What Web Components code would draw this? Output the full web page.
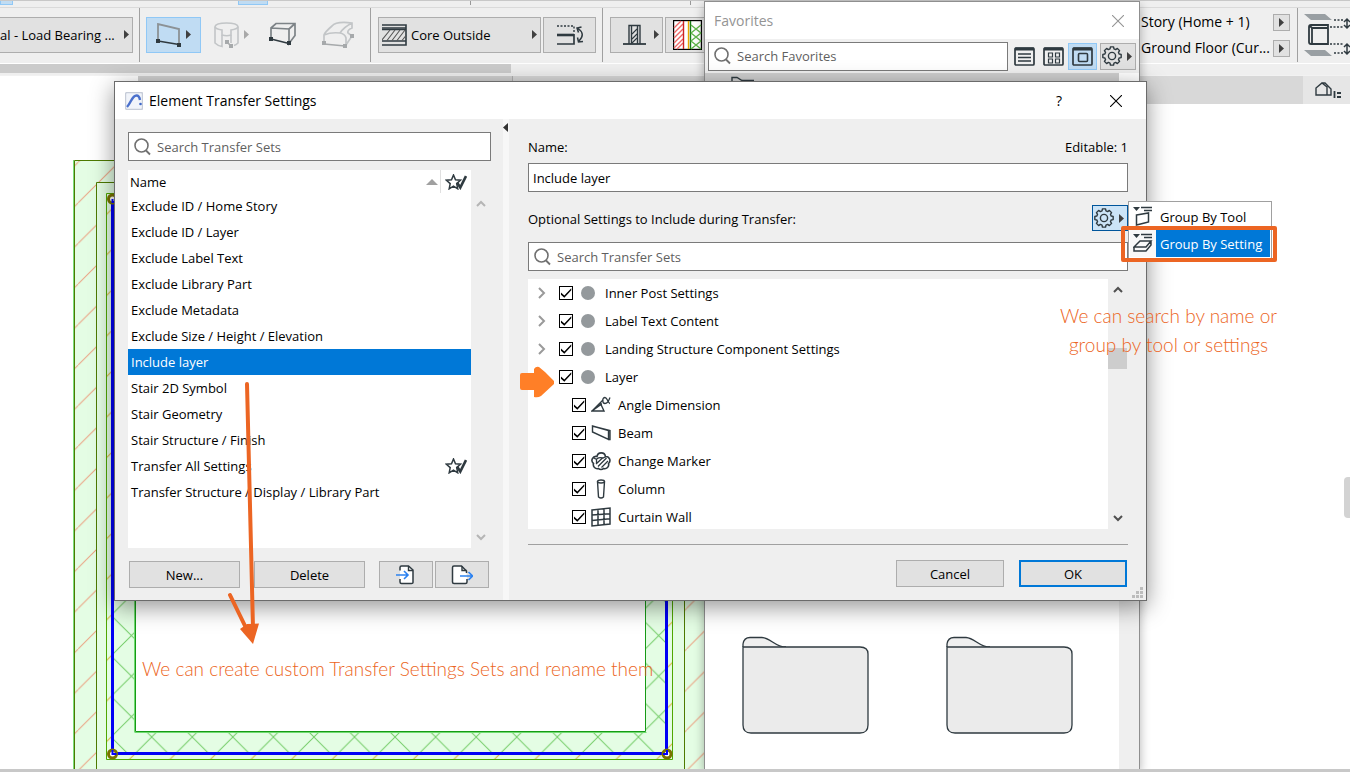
<!DOCTYPE html>
<html lang="en">
<head>
<meta charset="utf-8">
<title>Element Transfer Settings</title>
<style>
  html, body { margin: 0; height: 100%; }
  body { font: 13px/20px "Open Sans", "Noto Sans", sans-serif; color: #000; background: #fff; overflow: hidden; }
</style>
</head>
<body>
<app-shell></app-shell>

<script>
const INK = '#2f3a40';

function gearPath(c, inner, outer) {
  const pts = [];
  for (let i = 0; i < 8; i++) {
    const a = i * Math.PI / 4;
    [[-0.27, inner], [-0.17, outer], [0.17, outer], [0.27, inner]].forEach(([d, r]) =>
      pts.push((c + r * Math.sin(a + d)).toFixed(2) + ' ' + (c - r * Math.cos(a + d)).toFixed(2)));
  }
  return 'M' + pts.join('L') + 'Z';
}

/* name: [width, height, markup] */
const ICONS = {
  search: [17, 18, '<circle cx="7.5" cy="7.5" r="6.5" stroke="#707070" stroke-width="1.6"/><path d="M12 12.5l4 4" stroke="#707070" stroke-width="1.8"/>'],
  gear: [20, 20, `<path d="${gearPath(10, 7.4, 9.3)}" stroke-linejoin="round" stroke-width="1.4"/><circle cx="10" cy="10" r="3.6" stroke-width="1.4"/>`],
  play: [5, 9, '<path d="M0 0l5 4.5L0 9z" fill="#404040" stroke="none"/>'],
  playDim: [5, 9, '<path d="M0 0l5 4.5L0 9z" fill="#a8a8a8" stroke="none"/>'],
  collapse: [5, 9, '<path d="M5 0v9L0 4.5z" fill="#333" stroke="none"/>'],
  sort: [12, 6, '<path d="M0 6L6 0l6 6z" fill="#a0a0a0" stroke="none"/>'],
  close: [12, 12, '<path d="M0 0l12 12M12 0L0 12" stroke="currentColor" stroke-width="1.1"/>'],
  right: [8, 12, '<path d="M1 1l5 5-5 5" stroke="#9a9a9a" stroke-width="2"/>'],
  up: [10, 7, '<path d="M1 6l4-4 4 4" stroke="currentColor" stroke-width="2"/>'],
  down: [10, 7, '<path d="M1 1l4 4 4-4" stroke="currentColor" stroke-width="2"/>'],
  star: [22, 16, '<path d="M8.500 1l2 4.800 5 .4-3.800 3.400 1 5.200-4.200-2.700L4.200 14.800l1-5.200L1.300 6.200l5.200-.4z" stroke-width="1.500"/><path d="M12 8.500l3.300 5L21 2" stroke-width="2.600"/>'],
  dot: [14, 14, '<circle cx="7" cy="7" r="7" fill="#94999c" stroke="none"/>'],
  app: [18, 18, '<rect x=".5" y=".5" width="17" height="17" rx="1.500" fill="#f1f4fa" stroke="#c6ccd8"/><path d="M2 15C6 11 7 3.500 11.500 3.500c2.500 0 3 1.500 3.500 4.500" stroke="#4a70cc" stroke-width="2.400"/><circle cx="15.500" cy="12" r="1.300" fill="#3f68c8" stroke="none"/>'],
  angle: [20, 18, '<path d="M1 15h12L10 8.500zM1 15L12 4M8 8l3 0"/><path d="M19 1.500c-1.500 4-3 6-5 6-3 0-3-6 0-6 2.500 0 3 6 5 6" stroke-width="1.300"/>'],
  beam: [20, 18, '<path d="M1.500 2v6l16 7.500V6.500zM1 2l18 4.500v9h-2"/>'],
  marker: [20, 20, '<path d="M6 5.500a4.300 4.300 0 0 1 8.500 0 4 4 0 0 1 3 7 4 4 0 0 1-5 5 3.500 3.500 0 0 1-5 0 4 4 0 0 1-5-5A4 4 0 0 1 6 5.500z" stroke-width="1.600"/><path d="M2.500 6.500Q5 9 6.500 7.500T12 7l3-1.500M5 13l6.500-6M7 15.500l8.500-8.500M10.500 16.500L17 10M5.500 8v5" stroke-width="1.300"/>'],
  column: [20, 20, '<path d="M6.500 2.500l1 15.500q2.500 2 5 0l1-15.500"/><ellipse cx="10" cy="2.500" rx="3.500" ry="1.500"/>'],
  curtain: [20, 20, '<path d="M1 3l18-2v16L1 19zM7 2.300v16M13 1.700v16M1 8l18-1.300M1 13.500l18-1.800" stroke-width="1.500"/>'],
  groupTool: [20, 20, '<path d="M0 1h7L3.500 5z" fill="#2f3a40" stroke="none"/><path d="M8 1.500h11M11 4.500h8M3.500 9l12-2v9l-4 1-8 2z" stroke-width="1.500"/>'],
  groupSetting: [20, 20, '<path d="M0 1h7L3.500 5z" fill="#2f3a40" stroke="none"/><path d="M8 1.500h11M11 4.500h8M7 8h11l-5 6H1zM1 14v4h12l5-6V8" stroke-width="1.500"/>'],
  importSet: [22, 20, '<path d="M5 5.500V2.500q0-1.500 1.500-1.500h7L18 5v12.500q0 1-1.500 1h-10Q5 18.500 5 17v-3" fill="#fff" stroke-width="1.500"/><path d="M13.500 1v4.500H18"/><path d="M1 10h11M9 6l4 4-4 4" stroke="#2c82f0" stroke-width="1.600"/>'],
  exportSet: [22, 20, '<path d="M16 14v3q0 1.500-1.500 1.500H3q-1.500 0-1.500-1.500V2.500Q1.500 1 3 1h7.500L15.500 6v2" fill="#fff" stroke-width="1.500"/><path d="M11 1v4.500h4.500"/><path d="M9 11h12M17.500 7l4 4-4 4" stroke="#2c82f0" stroke-width="1.600"/>'],
  listView: [21, 19, '<rect x="1" y="1" width="19" height="17" rx="1" stroke-width="1.700"/><path d="M1 2h19" stroke-width="3"/><path d="M4 7h13M4 10.500h13M4 14h13" stroke-width="1.300"/>'],
  gridView: [21, 19, '<rect x="1" y="1" width="19" height="17" rx="1" stroke-width="1.700"/><path d="M1 2h19" stroke-width="3"/><path d="M5.500 6h4v4h-4zM12.500 6h4v4h-4zM5.500 12h4v4h-4zM12.500 12h4v4h-4z" stroke-width="1.200"/>'],
  cardView: [21, 19, '<rect x="1" y="1" width="19" height="17" rx="1" stroke-width="1.700"/><path d="M1 2h19" stroke-width="3"/><rect x="6.500" y="6.500" width="9" height="8" rx="1" stroke-width="1.600"/>'],
  wallRect: [26, 24, '<path d="M2 18V1l21 5v15" stroke="#8c9296" stroke-width="1.800"/><path d="M2 18l21 3.500" stroke-width="1.600"/><path d="M0 16h4v4H0zM21 20h4v4h-4z" fill="#2f3a40" stroke="none"/>'],
  wallCurve: [26, 26, '<g stroke="#c2c5c7" stroke-width="1.600"><path d="M8 8q-7-1-7-3.500Q2 1 12.500 1T24 4.500Q24 7 17 8v5q-4 1.500-9 0z"/><path d="M1 5v16q3 3 7 3.500V13M17 13v8M24 5v16q-2 2-4 2.500"/></g><path d="M13 20l4 4" stroke="#999"/><path d="M11 18h4v4h-4zM15 22h4v4h-4z" fill="#a6a9ab" stroke="none"/>'],
  wallBox: [28, 25, '<path d="M2 17V6l5-4.500h19v12l-6 8V7L2 6M20 7l6-5.500" stroke="#7d8387" stroke-width="1.700"/><path d="M2 17l18 4.500" stroke-width="1.600"/><path d="M0 15h4v4H0zM18 19h4v4h-4z" fill="#2f3a40" stroke="none"/>'],
  wallPoly: [32, 27, '<g stroke="#c2c5c7" stroke-width="1.700"><path d="M2 22V14Q3 11 10 5q4-5 20-3v5q-5 2-4 5l4 3-6 9V17Q23 13 18 12q-9-1-16 2M18 12q4-6 12-10"/></g><path d="M2 23l21 2" stroke="#a6a9ab"/><path d="M0 20h4v4H0zM21 23h4v4h-4zM28 13h4v4h-4z" fill="#a6a9ab" stroke="none"/>'],
  coreOutside: [25, 24, '<path d="M0 2h24v20H0M0 18h24M0 5h24" stroke-width="1.600"/><path d="M0 6.500h24" stroke-width="1.500"/><path d="M0 17l8-10M5 17.500L13 7M10 17.500L18 7M15 17.500L23 7M20 17.500l4-5" stroke="#555" stroke-width="1.100"/>'],
  flip: [28, 22, '<path d="M1 2h17v7" stroke-dasharray="2 1.500" stroke-width="1.400"/><path d="M1 11h17" stroke-width="2.600"/><path d="M18 10v10H1" stroke-width="1.700"/><path d="M22 4.500q8 5.500 1 12.500M25.500 3L21 4l1.500 4.500M21.500 13.500l1 4.500 4.500-.5" stroke-width="1.500"/>'],
  profile: [23, 22, '<path d="M0 20h23" stroke-width="1.800"/><path d="M6 20V1.500h11V20M8.500 2v18M14.500 2v18" stroke-width="1.400"/><path d="M9 10l5-5M9 15l5-5M9 19l5-5" stroke-width="1.100"/>'],
  composite: [29, 30, '<rect x=".5" y=".5" width="28" height="29" fill="#fff" stroke="#000"/><path d="M1 8l7-7M1 13L10 4M1 18l9-9M1 23l9-9M1 28l9-9M4 29l6-6" stroke="#e66"/><path d="M10.500 1v28" stroke="#c22"/><path d="M15.500 1v28" stroke="#e7a400"/><path d="M17.500 1v28" stroke="#197a19"/><path d="M18 5l10 8M18 13l10 8M18 21l10 8M28 5l-10 8M28 13l-10 8M28 21l-10 8" stroke="#5fb54a"/>'],
  story: [46, 44, '<path d="M0 1h21l7 6H7zM0 37h21l7 6H7z" fill="#999fa3" stroke="none"/><path d="M5 14q0-2 2-2h17v19H7q-2 0-2-2zM5 14q3-1 3 2v14M8 15h16" stroke-width="1.800"/><path d="M30 7h10M26 14h14M26 31h14M30 40h10" stroke-dasharray="2 1.500" stroke-width="1.300"/><path d="M43 6v9M43 31v10M40 9l3-3 3 3M40 12l3 3 3-3M40 34l3-3 3 3M40 38l3 3 3-3" stroke-width="1.500"/>'],
  houseList: [28, 17, '<path d="M1 12V6l6-5 5 4v8H1zM7 1h3l6 6v6h-4" stroke-width="1.400"/><path d="M19.500 9v7M22 11h4M22 15h4" stroke-width="1.800"/>'],
  folderSmall: [23, 6, '<path d="M1 6V1.500h5l5 3h12"/>'],
  folder: [128, 98, '<path d="M1 11V8Q2 1.500 8 1.500h12C29 2 33 11 44 11" fill="#efefef" stroke-width="1.300"/><path d="M1 11h117q8 0 8 7v71q0 8-8 8H9q-8 0-8-8z" fill="#ebebeb" stroke-width="1.300"/>'],
  grip: [11, 11, '<path d="M8 0h3v3H8zM4 4h3v3H4zM8 4h3v3H8zM0 8h3v3H0zM4 8h3v3H4zM8 8h3v3H8z" fill="#bcbcbc" stroke="none"/>']
};

class Base extends HTMLElement {
  render(html) { this.attachShadow({ mode: 'open' }).innerHTML = html; }
}

class UiIcon extends Base {
  connectedCallback() {
    if (this.shadowRoot) return;
    const [w, h, body] = ICONS[this.getAttribute('name')];
    this.render(`<style>:host{display:block;flex:none;width:${w}px;height:${h}px}svg{display:block}</style>
      <svg width="${w}" height="${h}" viewBox="0 0 ${w} ${h}" fill="none" stroke="${INK}" stroke-width="1.4" aria-hidden="true">${body}</svg>`);
  }
}
customElements.define('ui-icon', UiIcon);

/* Push button; the kind attribute picks the look. */
class UiButton extends Base {
  connectedCallback() {
    if (this.shadowRoot) return;
    const label = this.getAttribute('label');
    this.render(`<style>
      :host{display:block;height:27px}
      button{box-sizing:border-box;width:100%;height:100%;margin:0;padding:0 4px;display:flex;align-items:center;justify-content:center;gap:4px;
        font:inherit;color:inherit;white-space:nowrap;background:#e1e1e1;border:1px solid #adadad;border-radius:0}
      :host([kind=default]) button{border:2px solid #0078d7}
      :host([kind=on]) button{background:#c0dcf3;border-color:#90c8f6}
      :host([kind=focus]) button{background:#cce4f7;border-color:#00559b}
      :host([kind=flat]) button{background:none;border-color:transparent}
      :host([kind=combo]) button{justify-content:space-between;padding:0 3px}
      :host([kind=edge]) button{justify-content:space-between;padding:0 3px 0 0;border-left:0}
      :host([spread]) button{justify-content:space-between;padding:0 3px 0 1px}
      </style><button type="button" ${label ? `aria-label="${label}"` : ''}><slot></slot></button>`);
  }
}
customElements.define('ui-button', UiButton);

class SearchField extends Base {
  connectedCallback() {
    if (this.shadowRoot) return;
    const text = this.getAttribute('placeholder');
    this.render(`<style>
      :host{display:block}
      label{box-sizing:border-box;height:29px;display:flex;align-items:center;gap:6px;padding-left:5px;background:#fff;border:1px solid #7a7a7a}
      input{flex:1;min-width:0;height:24px;margin:0;padding:0;border:0;outline:0;background:none;font:inherit}
      input::placeholder{color:#5f5f5f;opacity:1}
      </style><label><ui-icon name="search"></ui-icon><input type="text" aria-label="${text}" placeholder="${text}"></label>`);
  }
}
customElements.define('search-field', SearchField);

class TreeRow extends Base {
  connectedCallback() {
    if (this.shadowRoot) return;
    const child = this.hasAttribute('child');
    this.render(`<style>
      :host{display:flex;align-items:center;height:28px;padding-left:${child ? 44 : 10}px}
      .twist{width:21px}
      label{display:flex;align-items:center;white-space:nowrap}
      input{appearance:none;flex:none;box-sizing:border-box;width:14px;height:14px;margin:0;border:1px solid #000;background:#fff}
      input:checked::before{content:"";display:block;width:12px;height:12px;background:#000;clip-path:polygon(8% 46%,8% 64%,36% 90%,94% 28%,94% 10%,36% 70%)}
      .mark{width:20px;margin:0 ${child ? '7px 0 5px' : '4px 0 8px'}}
      </style>
      ${child ? '' : `<span class="twist">${this.hasAttribute('open') ? '' : '<ui-icon name="right"></ui-icon>'}</span>`}
      <label><input type="checkbox" checked><span class="mark"><ui-icon name="${this.getAttribute('icon') || 'dot'}"></ui-icon></span><slot></slot></label>`);
  }
}
customElements.define('tree-row', TreeRow);

class SetTable extends Base {
  connectedCallback() {
    if (this.shadowRoot) return;
    const rows = ['Exclude ID / Home Story', 'Exclude ID / Layer', 'Exclude Label Text', 'Exclude Library Part', 'Exclude Metadata',
      'Exclude Size / Height / Elevation', 'Include layer', 'Stair 2D Symbol', 'Stair Geometry', 'Stair Structure / Finish',
      'Transfer All Settings', 'Transfer Structure / Display / Library Part'];
    this.render(`<style>
      :host{display:block;flex:1;background:#fff}
      table{width:100%;border-collapse:collapse;table-layout:fixed}
      th,td{padding:0 0 0 3px;text-align:left;font-weight:normal;white-space:nowrap}
      th{height:23px;padding-left:2px}
      td{height:26px}
      th:last-child,td:last-child{width:26px;padding-left:4px}
      th:last-child{border-left:1px solid #e0e0e0}
      .head{display:flex;align-items:center;justify-content:space-between;padding-right:2px}
      .sel{background:#0078d7;color:#fff}
      </style>
      <table><thead><tr><th><span class="head">Name<ui-icon name="sort"></ui-icon></span></th><th aria-label="Favorite"><ui-icon name="star"></ui-icon></th></tr></thead>
      <tbody>${rows.map(r => `<tr${r === 'Include layer' ? ' class="sel" aria-selected="true"' : ''}><td>${r}</td><td>${r === 'Transfer All Settings' ? '<ui-icon name="star"></ui-icon>' : ''}</td></tr>`).join('')}</tbody></table>`);
  }
}
customElements.define('set-table', SetTable);

class GroupMenu extends Base {
  connectedCallback() {
    if (this.shadowRoot) return;
    this.render(`<style>
      :host{display:block;box-sizing:border-box;width:144px;padding:1px;background:#fff;border:1px solid #a0a0a0}
      button{box-sizing:border-box;width:100%;height:27px;margin:0;padding:0;display:flex;align-items:center;border:0;background:#fff;font:inherit;color:#000;white-space:nowrap}
      span{box-sizing:border-box;width:26px;height:27px;margin-right:4px;padding:3px;background:#fff}
      .on{background:#0078d7;color:#fff}
      .on span{background:#f8f8f8}
      </style>
      <button type="button"><span><ui-icon name="groupTool"></ui-icon></span>Group By Tool</button>
      <button type="button" class="on"><span><ui-icon name="groupSetting"></ui-icon></span>Group By Setting</button>`);
  }
}
customElements.define('group-menu', GroupMenu);

class TransferDialog extends Base {
  connectedCallback() {
    if (this.shadowRoot) return;
    this.render(`<style>
      :host{display:flex;flex-direction:column;box-sizing:border-box;border:1px solid #6b6b6b;background:#efefef;box-shadow:0 6px 22px rgba(0,0,0,.42)}
      header{display:flex;align-items:center;height:37px;padding:0 23px 0 10px;background:#fff;font-size:14px}
      header span{flex:1;padding-left:6px}
      header button{border:0;background:none;padding:0;margin-left:43px;font:inherit;color:#000;width:14px;height:20px;display:flex;align-items:center;justify-content:center}
      .body{display:grid;grid-template-columns:388px 6px 1fr}
      .left{display:flex;flex-direction:column;padding:13px 12px 12px 13px}
      .split{background:#f7f7f7;padding:4px 0 0 0}
      .list{display:flex;height:378px;margin-top:9px}
      .bar{box-sizing:border-box;width:20px;display:flex;flex-direction:column;align-items:center;justify-content:space-between;padding:30px 0 7px;color:#b5b5b5}
      .acts{display:flex;margin:13px 0 0 1px;gap:14px}
      .acts ui-button{width:111px}
      .acts div{display:flex;gap:2px}
      .acts div ui-button{width:54px}
      .right{display:flex;flex-direction:column;padding:13px 18px 13px 19px}
      .row{display:flex;align-items:center;justify-content:space-between}
      .name{height:29px;padding-bottom:2px}
      #setname{box-sizing:border-box;width:100%;height:29px;margin:0;padding:0 4px;border:1px solid #7a7a7a;border-radius:0;background:#fff;font:inherit;color:#000}
      .opt{height:26px;margin:13px 0 11px}
      .opt>span{padding-top:2px}
      .opt>div{position:relative}
      .opt ui-button{width:36px;height:26px}
      group-menu{position:absolute;left:100%;top:-4px;z-index:3}
      .tree{display:flex;height:250px;margin-top:8px}
      .rows{flex:1;overflow:hidden;background:#fff}
      .scroll{box-sizing:border-box;width:20px;display:flex;flex-direction:column;align-items:center;padding:7px 1px 7px 0;color:#505050}
      .thumb{width:19px;height:21px;margin:55px 0 auto;background:#cdcdcd}
      hr{width:100%;margin:15px 0 15px;border:0;border-top:1px solid #a0a0a0}
      .end{display:flex;justify-content:flex-end;gap:15px;padding-right:1px}
      .end ui-button{width:108px}
      .grip{position:absolute;right:3px;bottom:2px}
      </style>
      <header><ui-icon name="app"></ui-icon><span>Element Transfer Settings</span>
        <button type="button" aria-label="Help">?</button><button type="button" aria-label="Close"><ui-icon name="close"></ui-icon></button></header>
      <div class="body">
        <div class="left">
          <search-field placeholder="Search Transfer Sets"></search-field>
          <div class="list"><set-table></set-table><div class="bar"><ui-icon name="up"></ui-icon><ui-icon name="down"></ui-icon></div></div>
          <div class="acts"><ui-button>New...</ui-button><ui-button>Delete</ui-button>
            <div><ui-button label="Import"><ui-icon name="importSet"></ui-icon></ui-button><ui-button label="Export"><ui-icon name="exportSet"></ui-icon></ui-button></div></div>
        </div>
        <div class="split"><ui-icon name="collapse"></ui-icon></div>
        <div class="right">
          <div class="row name"><label for="setname">Name:</label><span>Editable: 1</span></div>
          <input id="setname" type="text" value="Include layer">
          <div class="row opt"><span>Optional Settings to Include during Transfer:</span>
            <div><ui-button kind="focus" spread label="Grouping"><ui-icon name="gear"></ui-icon><ui-icon name="play"></ui-icon></ui-button><group-menu></group-menu></div></div>
          <search-field placeholder="Search Transfer Sets"></search-field>
          <div class="tree"><div class="rows">
            <tree-row>Inner Post Settings</tree-row>
            <tree-row>Label Text Content</tree-row>
            <tree-row>Landing Structure Component Settings</tree-row>
            <tree-row open>Layer</tree-row>
            <tree-row child icon="angle">Angle Dimension</tree-row>
            <tree-row child icon="beam">Beam</tree-row>
            <tree-row child icon="marker">Change Marker</tree-row>
            <tree-row child icon="column">Column</tree-row>
            <tree-row child icon="curtain">Curtain Wall</tree-row>
          </div><div class="scroll"><ui-icon name="up"></ui-icon><div class="thumb"></div><ui-icon name="down"></ui-icon></div></div>
          <hr>
          <div class="end"><ui-button>Cancel</ui-button><ui-button kind="default">OK</ui-button></div>
        </div>
      </div>
      <ui-icon class="grip" name="grip"></ui-icon>`);
  }
}
customElements.define('transfer-dialog', TransferDialog);

class FavoritesPanel extends Base {
  connectedCallback() {
    if (this.shadowRoot) return;
    this.render(`<style>
      :host{display:flex;flex-direction:column;box-sizing:border-box;border:1px solid #8f8f8f;border-bottom:0;background:#fff;box-shadow:0 4px 10px rgba(0,0,0,.3)}
      header{display:flex;align-items:center;justify-content:space-between;height:37px;padding:0 15px 0 9px;color:#949494;font-size:14px}
      header button{border:0;background:none;padding:0;color:#949494}
      .tools{display:flex;align-items:center;height:34px;padding:0 3px;background:#f0f0f0}
      search-field{flex:1;margin-right:2px}
      .tools ui-button{width:29px}
      .tools ui-button.gear{width:36px;margin-left:3px}
      .path{height:8px;margin-right:20px;padding:3px 0 0 26px;box-sizing:border-box;background:#cfcfcf;overflow:hidden}
      .view{flex:1;display:flex}
      .items{flex:1;display:flex;gap:76px;padding:555px 0 0 37px}
      .bar{width:20px;background:#efefef}
      </style>
      <header><span>Favorites</span><button type="button" aria-label="Close"><ui-icon name="close"></ui-icon></button></header>
      <div class="tools"><search-field placeholder="Search Favorites"></search-field>
        <ui-button kind="flat" label="List"><ui-icon name="listView"></ui-icon></ui-button>
        <ui-button kind="flat" label="Grid"><ui-icon name="gridView"></ui-icon></ui-button>
        <ui-button kind="on" label="Cards"><ui-icon name="cardView"></ui-icon></ui-button>
        <ui-button class="gear" spread label="Options"><ui-icon name="gear"></ui-icon><ui-icon name="play"></ui-icon></ui-button></div>
      <div class="path"><ui-icon name="folderSmall"></ui-icon></div>
      <div class="view"><div class="items"><ui-icon name="folder"></ui-icon><ui-icon name="folder"></ui-icon></div><div class="bar"></div></div>`);
  }
}
customElements.define('favorites-panel', FavoritesPanel);

class OptionBar extends Base {
  connectedCallback() {
    if (this.shadowRoot) return;
    this.render(`<style>
      :host{display:block;background:#efefef}
      .strip{box-sizing:border-box;height:8px;display:flex;border-top:1px solid #c8c8c8;border-bottom:1px solid #dadada}
      .strip i{height:4px;box-sizing:border-box}
      .hot{background:#c0dcf3;border:1px solid #90c8f6;border-top:0}
      .tick{width:1px;background:#999}
      .bar{display:flex;align-items:center;height:56px;gap:6px;box-sizing:border-box;border-bottom:1px solid #fff;padding-bottom:1px}
      .sep{flex:none;width:1px;height:54px;background:#a0a0a0}
      .bar ui-button{height:36px;margin-bottom:1px;flex:none}
      .bar .type{width:133px}
      .pair{display:flex;gap:2px;margin-left:1px}
      .gap{flex:1}
      .stories{width:150px;font-size:14px}
      .stories div{display:flex;align-items:center;justify-content:space-between;height:26px;padding-right:1px;white-space:nowrap}
      .bar .stories ui-button{width:17px;height:17px;margin:0}
      .scroll{height:11px;display:flex}
      .scroll div{width:511px;height:9px;background:#cbcbcb}
      </style>
      <div class="strip"><i class="hot" style="width:13px"></i><i style="width:225px"></i><i class="hot" style="width:30px"></i><i style="width:202px"></i><i class="tick"></i><i style="width:219px"></i><i class="tick"></i></div>
      <div class="bar">
        <ui-button class="type" kind="edge"><span>al - Load Bearing ...</span><ui-icon name="play"></ui-icon></ui-button>
        <div class="sep"></div>
        <ui-button kind="on" label="Straight wall" style="width:55px"><ui-icon name="wallRect"></ui-icon><ui-icon name="play"></ui-icon></ui-button>
        <ui-button kind="flat" label="Curved wall" style="width:48px"><ui-icon name="wallCurve"></ui-icon><ui-icon name="playDim"></ui-icon></ui-button>
        <ui-button kind="flat" label="Box wall" style="width:44px"><ui-icon name="wallBox"></ui-icon></ui-button>
        <ui-button kind="flat" label="Polygonal wall" style="width:53px"><ui-icon name="wallPoly"></ui-icon></ui-button>
        <div class="sep"></div>
        <div class="pair"><ui-button kind="combo" style="width:163px"><ui-icon name="coreOutside"></ui-icon><span style="flex:1;text-align:left">Core Outside</span><ui-icon name="play"></ui-icon></ui-button>
        <ui-button label="Flip" style="width:53px"><ui-icon name="flip"></ui-icon></ui-button></div>
        <div class="sep"></div>
        <div class="pair"><ui-button kind="combo" label="Profile" style="width:53px"><span></span><ui-icon name="profile"></ui-icon><ui-icon name="play"></ui-icon></ui-button>
        <ui-button label="Composite" style="width:44px"><ui-icon name="composite"></ui-icon></ui-button></div>
        <div class="gap"></div>
        <div class="stories">
          <div>Story (Home + 1)<ui-button label="Home story"><ui-icon name="play"></ui-icon></ui-button></div>
          <div>Ground Floor (Cur...<ui-button label="Current story"><ui-icon name="play"></ui-icon></ui-button></div></div>
        <div class="sep"></div>
        <ui-icon name="story"></ui-icon>
      </div>
      <div class="scroll"><div></div></div>`);
  }
}
customElements.define('option-bar', OptionBar);

class FloorPlan extends Base {
  connectedCallback() {
    if (this.shadowRoot) return;
    this.render(`<style>:host{display:block;overflow:hidden}svg{display:block}</style>
      <svg width="760" height="665" viewBox="0 104 760 665" fill="none" role="img" aria-label="Floor plan">
        <defs>
          <pattern id="brick" patternUnits="userSpaceOnUse" x="37.64" y="0" width="40.56" height="40.56"><path d="M40.56 0L0 40.56" stroke="#eb9f80"/></pattern>
          <pattern id="gold" patternUnits="userSpaceOnUse" x="37" y="0" width="40.56" height="40.56"><path d="M40.56 0L0 40.56" stroke="#d8b23c"/></pattern>
          <pattern id="wool" patternUnits="userSpaceOnUse" x="151.7" y="737" width="40.56" height="40.56"><path d="M0 0l40.56 40.56M40.56 0L0 40.56" stroke="#74cc68"/></pattern>
        </defs>
        <path d="M74 160.500h640V790H74z" fill="#e4fde4"/>
        <path d="M74 160h640v640H74z" fill="url(#brick)"/>
        <path d="M96.500 182.500h588V790h-588z" fill="#e4fde4" stroke="#4d7a00"/>
        <path d="M74.500 790V160.500H714" stroke="#4d7a00"/><path d="M73.500 790V160" stroke="#7bdc7b"/>
        <path d="M106.500 193.500h566v566h-566z" fill="url(#gold)" stroke="#4fa800"/>
        <path d="M112.500 199h554v554.500h-554z" fill="#e4fde4"/>
        <path d="M112.500 199h554v554.500h-554z" fill="url(#wool)" stroke="#0000f5" stroke-width="3"/>
        <path d="M135.500 221.500h510v510h-510z" fill="#fff" stroke="#169a16"/>
        <path d="M134.500 732.500h512" stroke="#6fdc6f"/><path d="M134.500 221v511" stroke="#6fdc6f"/>
        <g fill="#fff" stroke="#7a7200" stroke-width="3"><circle cx="112.500" cy="199" r="4"/><circle cx="112.500" cy="754" r="4"/><circle cx="667" cy="754" r="4"/></g>
        <path d="M112.500 199v3h2M112.500 750v4h4M667 750v4h-4" stroke="#00f" stroke-width="2"/>
      </svg>`);
  }
}
customElements.define('floor-plan', FloorPlan);

/* Orange note text laid over the windows. */
class CalloutNote extends Base {
  connectedCallback() {
    if (this.shadowRoot) return;
    this.render(`<style>:host{display:block;font:300 19px/29px Lato,"Open Sans",sans-serif;color:#ec6523;text-align:center;white-space:nowrap}p{margin:0}</style><p><slot></slot></p>`);
  }
}
customElements.define('callout-note', CalloutNote);

class AppShell extends Base {
  connectedCallback() {
    if (this.shadowRoot) return;
    this.render(`<style>
      :host{position:relative;display:flex;flex-direction:column;height:100vh;overflow:hidden}
      .tabs{display:flex;flex:none;height:28px;border-top:1px solid #f2f2f2}
      .tabs .a{width:138px}
      .tabs .b{width:374px;background:#d0d0d0;border-right:1px solid #b0b0b0}
      .tabs .c{flex:1;background:#d8d8d8}
      .tabs .d{width:47px;background:#e6e6e6;display:flex;align-items:center;box-sizing:border-box;padding-left:12px}
      floor-plan{flex:1}
      .status{flex:none;height:3px;background:#c8c8c8;position:relative;z-index:5}
      favorites-panel{position:absolute;top:1px;right:210px;bottom:3px;width:436px}
      transfer-dialog{position:absolute;top:81px;left:114px;right:203px}
      .handle{position:absolute;right:0;top:477px;width:6px;height:41px;background:#d3d3d3;border-radius:4px 0 0 4px}
      .frame{position:absolute;z-index:4;right:73px;top:226px;width:156px;height:36px;box-sizing:border-box;border:4px solid #ec6523;border-radius:2px}
      callout-note,.arrows,.hint{position:absolute;z-index:4}
      .n1{left:142px;top:654px}
      .n2{right:73px;top:301px}
      .arrows{left:220px;top:375px}
      .hint{left:519px;top:366px}
      </style>
      <option-bar></option-bar>
      <div class="tabs"><div class="a"></div><div class="b"></div><div class="c"></div><div class="d"><ui-icon name="houseList"></ui-icon></div></div>
      <floor-plan></floor-plan>
      <div class="status"></div>
      <div class="handle"></div>
      <favorites-panel></favorites-panel>
      <transfer-dialog></transfer-dialog>
      <div class="frame"></div>
      <svg class="arrows" width="50" height="275" viewBox="220 375 50 275" fill="#ec6523" stroke="#ec6523" aria-hidden="true">
        <path d="M247 384l6 244M230 595l18 37" stroke-width="4" stroke-linecap="round"/><path d="M240 629l7-5 12-.500L253 644z" stroke="none"/></svg>
      <svg class="hint" width="36" height="34" viewBox="0 0 36 34" fill="#ff7f27" aria-hidden="true"><path d="M1 9q0-2 2-2h12V3q2-3 5-2l6 5 9 9v3L22 30q-3 2-7 1v-7H3q-2 0-2-2z"/></svg>
      <callout-note class="n1">We can create custom Transfer Settings Sets and rename them</callout-note>
      <callout-note class="n2">We can search by name or<br>group by tool or settings</callout-note>`);
  }
}
customElements.define('app-shell', AppShell);
</script>
</body>
</html>
